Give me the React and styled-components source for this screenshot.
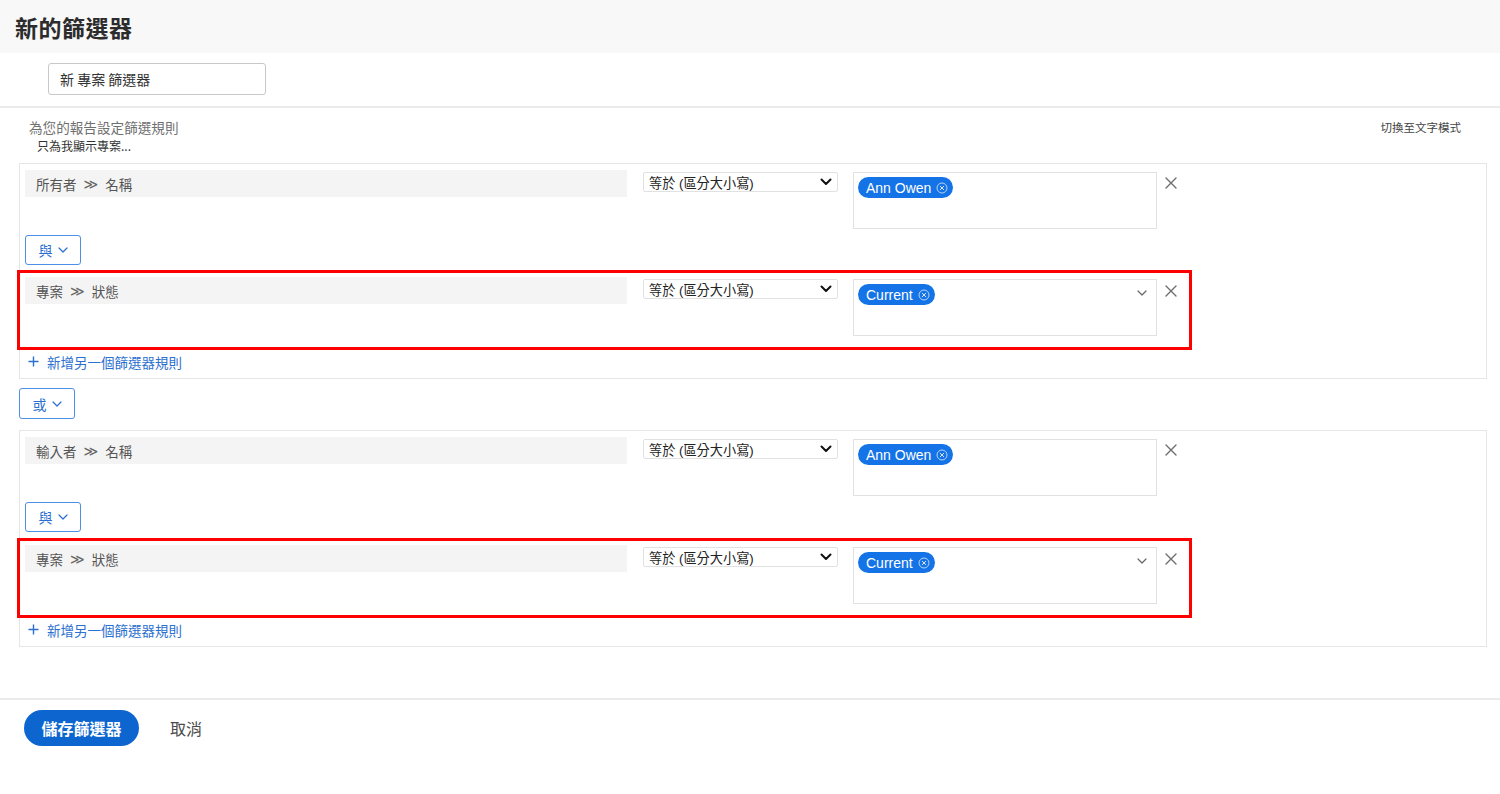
import React from "react";
import styled, { createGlobalStyle } from "styled-components";

const Global = createGlobalStyle`
  html, body { margin: 0; padding: 0; background: #fff; }
  body { font-family: "Liberation Sans", "Noto Sans CJK TC", sans-serif; color: #2c2c2c; }
  * { box-sizing: border-box; }
`;

const Page = styled.div`
  width: 1500px;
  min-height: 794px;
  display: flex;
  flex-direction: column;
`;

const Header = styled.div`
  height: 53px;
  background: #f8f8f8;
  display: flex;
  align-items: center;
  padding-left: 15px;
`;

const Title = styled.h1`
  margin: 0;
  font-size: 23px;
  font-weight: 700;
  color: #2c2c2c;
  font-family: "Noto Sans CJK TC", sans-serif;
  letter-spacing: 0.5px;
`;

const NameRow = styled.div`
  padding: 10px 0 11px 48px;
  border-bottom: 2px solid #ebebeb;
`;

const NameInput = styled.div`
  width: 218px;
  height: 32px;
  border: 1px solid #c8c8c8;
  border-radius: 3px;
  display: flex;
  align-items: center;
  padding-left: 11px;
  font-size: 14px;
  color: #333;
  font-family: "Noto Sans CJK TC", sans-serif;
`;

const Body = styled.div`
  padding: 9px 13px 0 19px;
  display: flex;
  flex-direction: column;
`;

const InfoBar = styled.div`
  display: flex;
  justify-content: space-between;
  align-items: flex-start;
  padding-right: 26px;
`;

const InfoText = styled.div`
  display: flex;
  flex-direction: column;
  padding-left: 10px;
`;

const Hint = styled.div`
  font-size: 13.6px;
  color: #707070;
  line-height: 20px;
  font-family: "Noto Sans CJK TC", sans-serif;
`;

const Sub = styled.div`
  font-size: 12px;
  color: #333;
  line-height: 18px;
  padding-left: 8px;
  font-family: "Noto Sans CJK TC", sans-serif;
`;

const SwitchLink = styled.div`
  font-size: 11.5px;
  color: #444;
  line-height: 18px;
  padding-top: 1px;
  font-family: "Noto Sans CJK TC", sans-serif;
`;

const Group = styled.div`
  border: 1px solid #e6e6e6;
  padding: 6px 5px 3px 5px;
  margin-top: ${(p) => p.$mt || 0}px;
  display: flex;
  flex-direction: column;
  align-items: flex-start;
`;

const Highlight = styled.div`
  border: 3px solid #f00;
  margin-left: -8px;
  padding: 4px 12px 11px 5px;
  margin-top: ${(p) => p.$mt || 5}px;
`;

const Row = styled.div`
  display: flex;
  align-items: flex-start;
`;

const Field = styled.div`
  width: 602px;
  height: 27px;
  background: #f4f4f4;
  display: flex;
  align-items: center;
  padding-left: 11px;
  font-size: 13.5px;
  color: #555;
  font-family: "Noto Sans CJK TC", sans-serif;
  gap: 7px;
`;

const Chevrons = styled.span`
  font-size: 14px;
  color: #666;
  font-family: "DejaVu Sans", sans-serif;
`;

const Select = styled.div`
  width: 195px;
  height: 20px;
  margin: 2px 0 0 16px;
  border: 1px solid #e1e1e1;
  border-radius: 2px;
  display: flex;
  align-items: center;
  justify-content: space-between;
  padding: 0 5px 0 5px;
  font-size: 13.2px;
  color: #222;
  font-family: "Liberation Sans", "Noto Sans CJK TC", sans-serif;
`;

const ValueBox = styled.div`
  width: 304px;
  height: 57px;
  margin: 2px 0 0 15px;
  border: 1px solid #e1e1e1;
  padding: 4px 0 0 4px;
  position: relative;
`;

const Pill = styled.span`
  display: inline-flex;
  align-items: center;
  gap: 5px;
  height: 21px;
  padding: 0 5px 0 8px;
  border-radius: 11px;
  background: #1473e6;
  color: #fff;
  font-size: 14px;
  font-family: "Liberation Sans", sans-serif;
`;

const BoxChevron = styled.span`
  position: absolute;
  right: 9px;
  top: 10px;
  display: flex;
`;

const CloseBtn = styled.span`
  margin: ${(p) => (p.$hl ? 8 : 7)}px 0 0 8px;
  display: flex;
`;

const Connector = styled.div`
  width: ${(p) => p.$w || 56}px;
  height: ${(p) => p.$h || 30}px;
  margin-top: ${(p) => p.$mt || 0}px;
  border: 1px solid #4b8fe6;
  border-radius: 3px;
  display: flex;
  align-items: center;
  justify-content: center;
  gap: 5px;
  color: #2b6fd0;
  font-size: 14px;
  font-family: "Noto Sans CJK TC", sans-serif;
`;

const AddLink = styled.div`
  display: flex;
  align-items: center;
  gap: 8px;
  height: 25px;
  padding: 0 0 2px 3px;
  color: #2b6fd0;
  font-size: 13.5px;
  font-family: "Noto Sans CJK TC", sans-serif;
`;

const Footer = styled.div`
  margin-top: 51px;
  border-top: 2px solid #ebebeb;
  padding: 10px 0 0 24px;
  display: flex;
  align-items: center;
  gap: 31px;
`;

const SaveBtn = styled.div`
  width: 115px;
  height: 36px;
  border-radius: 18px;
  background: #0d66d0;
  color: #fff;
  font-size: 16px;
  font-weight: 700;
  display: flex;
  align-items: center;
  justify-content: center;
  font-family: "Noto Sans CJK TC", sans-serif;
`;

const CancelBtn = styled.div`
  font-size: 16px;
  color: #4b4b4b;
  font-family: "Noto Sans CJK TC", sans-serif;
`;

const BoldChevron = () => (
  <svg width="12" height="8" viewBox="0 0 12 8">
    <path d="M1.5 1.5 L6 6 L10.5 1.5" fill="none" stroke="#111" strokeWidth="2" strokeLinecap="round" strokeLinejoin="round" />
  </svg>
);

const ThinChevron = ({ color = "#666" }) => (
  <svg width="10" height="6" viewBox="0 0 10 6">
    <path d="M1 1 L5 5 L9 1" fill="none" stroke={color} strokeWidth="1.2" strokeLinecap="round" strokeLinejoin="round" />
  </svg>
);

const XIcon = () => (
  <svg width="12" height="12" viewBox="0 0 12 12">
    <path d="M1 1 L11 11 M11 1 L1 11" stroke="#6e6e6e" strokeWidth="1.4" strokeLinecap="round" />
  </svg>
);

const PillX = () => (
  <svg width="12" height="12" viewBox="0 0 12 12">
    <circle cx="6" cy="6" r="5" fill="none" stroke="#b9d4f7" strokeWidth="1" />
    <path d="M4.3 4.3 L7.7 7.7 M7.7 4.3 L4.3 7.7" stroke="#dbe8fb" strokeWidth="1" strokeLinecap="round" />
  </svg>
);

const Plus = () => (
  <svg width="11" height="11" viewBox="0 0 11 11">
    <path d="M5.5 0.5 V10.5 M0.5 5.5 H10.5" stroke="#2b6fd0" strokeWidth="1.4" />
  </svg>
);

const Rule = ({ left, right, value, dropdown }) => (
  <Row>
    <Field>
      <span>{left}</span>
      <Chevrons>≫</Chevrons>
      <span>{right}</span>
    </Field>
    <Select>
      <span>等於 (區分大小寫)</span>
      <BoldChevron />
    </Select>
    <ValueBox>
      <Pill>
        {value}
        <PillX />
      </Pill>
      {dropdown && (
        <BoxChevron>
          <ThinChevron />
        </BoxChevron>
      )}
    </ValueBox>
    <CloseBtn $hl={dropdown}>
      <XIcon />
    </CloseBtn>
  </Row>
);

const FilterGroup = ({ first, mt, hlTop }) => (
  <Group $mt={mt}>
    <Rule left={first} right="名稱" value="Ann Owen" />
    <Connector $mt={6}>
      與 <ThinChevron color="#2b6fd0" />
    </Connector>
    <Highlight $mt={hlTop}>
      <Rule left="專案" right="狀態" value="Current" dropdown />
    </Highlight>
    <AddLink>
      <Plus />
      新增另一個篩選器規則
    </AddLink>
  </Group>
);

export default function App() {
  return (
    <Page>
      <Global />
      <Header>
        <Title>新的篩選器</Title>
      </Header>
      <NameRow>
        <NameInput>新 專案 篩選器</NameInput>
      </NameRow>
      <Body>
        <InfoBar>
          <InfoText>
            <Hint>為您的報告設定篩選規則</Hint>
            <Sub>只為我顯示專案...</Sub>
          </InfoText>
          <SwitchLink>切換至文字模式</SwitchLink>
        </InfoBar>
        <FilterGroup first="所有者" mt={8} hlTop={5} />
        <Connector $mt={9} $h={31}>
          或 <ThinChevron color="#2b6fd0" />
        </Connector>
        <FilterGroup first="輸入者" mt={11} hlTop={6} />
      </Body>
      <Footer>
        <SaveBtn>儲存篩選器</SaveBtn>
        <CancelBtn>取消</CancelBtn>
      </Footer>
    </Page>
  );
}
